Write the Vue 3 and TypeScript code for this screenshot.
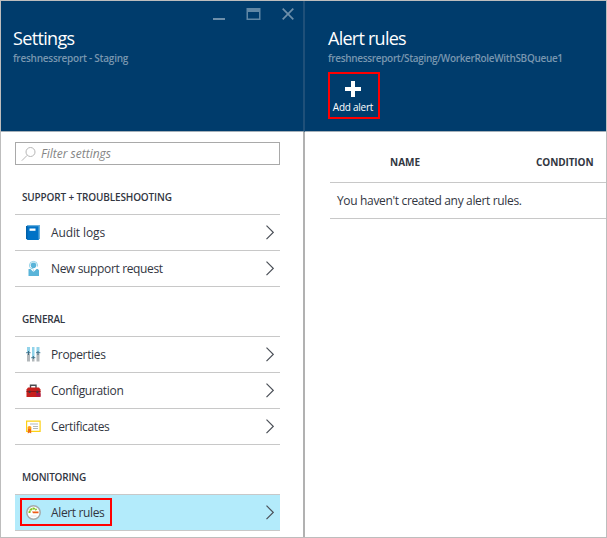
<script setup lang="ts">
interface Item { label: string; icon: string; cls: string; active?: boolean }
interface Group { title: string; cls: string; items: Item[] }

const groups: Group[] = [
  { title: 'SUPPORT + TROUBLESHOOTING', cls: 'g-support', items: [
    { label: 'Audit logs', icon: 'book', cls: 'l-audit' },
    { label: 'New support request', icon: 'person', cls: 'l-request' },
  ] },
  { title: 'GENERAL', cls: 'g-general', items: [
    { label: 'Properties', icon: 'sliders', cls: 'l-properties' },
    { label: 'Configuration', icon: 'toolbox', cls: 'l-configuration' },
    { label: 'Certificates', icon: 'certificate', cls: 'l-certificates' },
  ] },
  { title: 'MONITORING', cls: 'g-monitoring', items: [
    { label: 'Alert rules', icon: 'gauge', cls: 'l-alert', active: true },
  ] },
]
</script>

<template>
  <div class="frame">
    <section class="blade settings">
      <header class="head">
        <div class="window-buttons">
          <svg width="82" height="14" viewBox="0 0 82 14">
            <path d="M0 12h12" stroke-width="2" />
            <path d="M33.500 1h14v12h-14z" class="solid" />
            <path d="M35 5h11v6.500h-11z" class="hole" />
            <path d="M69.700 1.700l10.600 10.600M80.300 1.700l-10.600 10.600" stroke-width="1.700" />
          </svg>
        </div>
        <h1><span class="t-settings">Settings</span></h1>
        <p><span class="s-settings">freshnessreport - Staging</span></p>
      </header>
      <div class="body">
        <div class="filter">
          <svg width="16" height="16" viewBox="0 0 16 16">
            <circle cx="9.500" cy="6" r="4.500" />
            <path d="M6.200 9.300L0.800 14.700" />
          </svg>
          <span>Filter settings</span>
        </div>
        <div v-for="g in groups" :key="g.title" class="group">
          <h2><span :class="g.cls">{{ g.title }}</span></h2>
          <ul>
            <li v-for="i in g.items" :key="i.label" :class="{ active: i.active }">
              <div class="entry">
                <svg v-if="i.icon === 'book'" class="icon" width="16" height="16" viewBox="0 0 16 16">
                  <path d="M2.500 1.500H15V14l-1.500 2H2.500L1 14.500V2.500z" fill="#0072c6" />
                  <path d="M2 1h13v1.300H2zM13.500 1H15v13l-1.500 1z" fill="#68aedb" />
                  <path d="M1 2h1.500v13.500L1 14.500z" fill="#0060a9" />
                  <path d="M4.500 4.500h6v2.300h-6z" fill="#fff" />
                </svg>
                <svg v-else-if="i.icon === 'person'" class="icon" width="16" height="16" viewBox="0 0 16 16">
                  <path d="M4.500 6.500V5.200a4 3.800 0 0 1 8 0v1.300" fill="none" stroke="#8fd0e7" />
                  <circle cx="8.500" cy="5.200" r="2.800" fill="#59b4d9" />
                  <path d="M4.500 6.500Q5 9 8.500 8.800" fill="none" stroke="#8fd0e7" />
                  <path d="M3.500 9h2l3 3 3-3h1.300l1.200 1.200V16H3.500z" fill="#59b4d9" />
                  <path d="M8.500 9.500V12" stroke="#b5dff0" />
                </svg>
                <svg v-else-if="i.icon === 'sliders'" class="icon" width="16" height="16" viewBox="0 0 16 16">
                  <path d="M2 1h3v5H2zM7 1h2.500v10H7zM11.500 1h3v5h-3z" fill="#92d3ea" />
                  <path d="M2 7.500h3V15.500H2zM7 12.500h2.500v3H7zM11.500 7.500h3v8h-3z" fill="#b2b7ba" />
                  <path d="M1.200 6h4.300v1.300H1.200zM6.300 11h4v1.300h-4zM11 6h4.300v1.300H11z" fill="#5a8ca3" />
                  <path d="M3 5h1v4H3zM7.800 10h1v3h-1zM12.500 5h1v4h-1z" fill="#3f6b80" />
                </svg>
                <svg v-else-if="i.icon === 'toolbox'" class="icon" width="16" height="16" viewBox="0 0 16 16">
                  <path d="M5.500 6V3.200h5.500V6" fill="none" stroke="#484c50" stroke-width="1.400" />
                  <path d="M3 5.500h11l1.500 2V15H1.500V7.500z" fill="#c7201d" />
                  <path d="M1.500 9h14v1h-14z" fill="#8d1519" />
                  <path d="M11 10l4.500 1.500v3h-4z" fill="#a31850" />
                  <path d="M3.700 8.700h1.800v2.300H3.700zM11.500 8.700h1.800v2.300h-1.800z" fill="#3e3e42" />
                </svg>
                <svg v-else-if="i.icon === 'certificate'" class="icon" width="16" height="16" viewBox="0 0 16 16">
                  <path d="M1.600 3.100h13.500v10.300H1.600z" fill="#fff" stroke="#fcd116" stroke-width="1.200" />
                  <path d="M5 6h8M8 8.500h5M8 10.500h5" stroke="#b4b9bd" />
                  <circle cx="4.500" cy="10" r="2" fill="#ff9b16" />
                  <path d="M2.800 11h3.400V15.500L4.500 14.500l-1.700 1z" fill="#ee6b12" />
                </svg>
                <svg v-else class="icon" width="16" height="16" viewBox="0 0 16 16">
                  <circle cx="8.500" cy="8.500" r="6.700" fill="#fff" stroke="#a5aaab" stroke-width="1.500" />
                  <path d="M4.500 9a4 4 0 0 1 7-3" fill="none" stroke="#83c526" stroke-width="2" stroke-dasharray="2.300 .5" />
                  <path d="M7 7.600l6.500 0v1.600H8z" fill="#ee5b16" />
                  <path d="M5.500 12h6" stroke="#dfe4e4" />
                </svg>
                <span class="label"><span :class="i.cls">{{ i.label }}</span></span>
              </div>
              <svg class="chevron" width="8" height="15" viewBox="0 0 8 15"><path d="M.5 .7L7.200 7.400.5 14.100" /></svg>
            </li>
          </ul>
        </div>
      </div>
    </section>
    <section class="blade alerts">
      <header class="head">
        <h1><span class="t-alerts">Alert rules</span></h1>
        <p><span class="s-alerts">freshnessreport/Staging/WorkerRoleWithSBQueue1</span></p>
        <button class="add">
          <svg width="16" height="16" viewBox="0 0 16 16"><path d="M6 0h4v6h6v4h-6v6H6v-6H0V6h6z" fill="#fff" /></svg>
          <span>Add alert</span>
        </button>
      </header>
      <div class="table">
        <div class="columns"><span class="c-name">NAME</span><span class="c-cond">CONDITION</span></div>
        <div class="empty"><span>You haven't created any alert rules.</span></div>
      </div>
    </section>
  </div>
</template>

<style>
body { margin: 0; overflow: hidden; }
</style>

<style scoped>
* { box-sizing: border-box; }
.frame {
  display: flex; width: 607px; height: 538px; overflow: hidden;
  border: 1px solid #bdbdbd; background: #fff;
  font-family: "Open Sans", "Noto Sans", sans-serif; font-size: 12px; color: #32363f;
  white-space: nowrap;
}
h1, h2, p, ul { margin: 0; padding: 0; list-style: none; font-weight: 400; }
.blade { height: 536px; }
.settings { width: 304px; border-right: 2px solid #b1b1b1; flex: none; }
.alerts { flex: 1; min-width: 0; }
.head { height: 131px; padding: 0 12px; background: #003c6c; border-bottom: 1px solid #a5b0b9; color: #fff; }
.settings .head { width: 304px; border-right: 2px solid #1f5079; }
.window-buttons { height: 25px; padding: 6px 0 0 200px; }
.window-buttons svg { display: block; stroke: #6d8faa; fill: none; }
.window-buttons .solid { fill: #6087a5; stroke: none; }
.window-buttons .hole { fill: #003c6c; stroke: none; }
.alerts .head { padding: 25px 23px 0; }
h1 { height: 25px; line-height: 24px; font-size: 18px; }
.t-settings { letter-spacing: -.65px; }
.t-alerts { letter-spacing: -.75px; }
.head p { height: 14px; line-height: 14px; font-size: 10px; font-weight: 600; color: #7997b0; }
.s-settings { letter-spacing: -.25px; }
.s-alerts { letter-spacing: -.33px; }
.body { padding: 10px 0 0 14px; }
.filter {
  width: 265px; height: 23px; display: flex; align-items: center; gap: 4px; padding-left: 5px;
  border: 1px solid #a9a9a9; color: #858585; font-style: italic;
}
.filter svg { fill: none; stroke: #b6b6b6; }
.group { width: 265px; }
.group h2 { height: 49px; padding: 25px 0 0 7px; font-size: 10px; line-height: 14px; font-weight: 600; }
.g-support { letter-spacing: -.15px; }
.g-general { letter-spacing: -.25px; }
.g-monitoring { letter-spacing: -.2px; }
ul { border-top: 1px solid #c8c8c8; }
li {
  display: flex; align-items: center; justify-content: space-between;
  height: 36px; padding: 0 6px 0 5px; border-bottom: 1px solid #c8c8c8;
}
li.active { background: #b3ebfb; }
.entry { display: flex; align-items: center; align-self: flex-start; width: 92px; height: 28px; margin-top: 3px; padding-left: 5px; border: 0 solid red; }
.icon { flex: none; margin-right: 10px; }
.label { letter-spacing: -.36px; padding-top: 1px; }
.l-audit { letter-spacing: -.12px; }
.l-configuration { letter-spacing: -.31px; }
.active .entry { border-width: 2px; padding-left: 3px; }
.chevron { fill: none; stroke: #4b5058; stroke-width: 1.200; }
.add {
  display: flex; flex-direction: column; align-items: center; width: 52px; height: 47px; margin-top: 7px;
  padding: 7px 2px 0 0; border: 2px solid red; background: none; color: #fff; font: 10px/14px "Open Sans", sans-serif;
  letter-spacing: -.25px;
}
.add svg { flex: none; margin-bottom: 3px; }
.table { padding-left: 25px; }
.columns { display: flex; height: 51px; padding: 22px 0 0 60px; font-size: 10px; line-height: 16px; font-weight: 700; border-bottom: 1px solid #c8c8c8; }
.c-name { width: 146px; }
.c-cond { letter-spacing: -.1px; }
.empty { height: 36px; padding-left: 7px; line-height: 36px; letter-spacing: -.34px; border-bottom: 1px solid #c8c8c8; }
</style>
